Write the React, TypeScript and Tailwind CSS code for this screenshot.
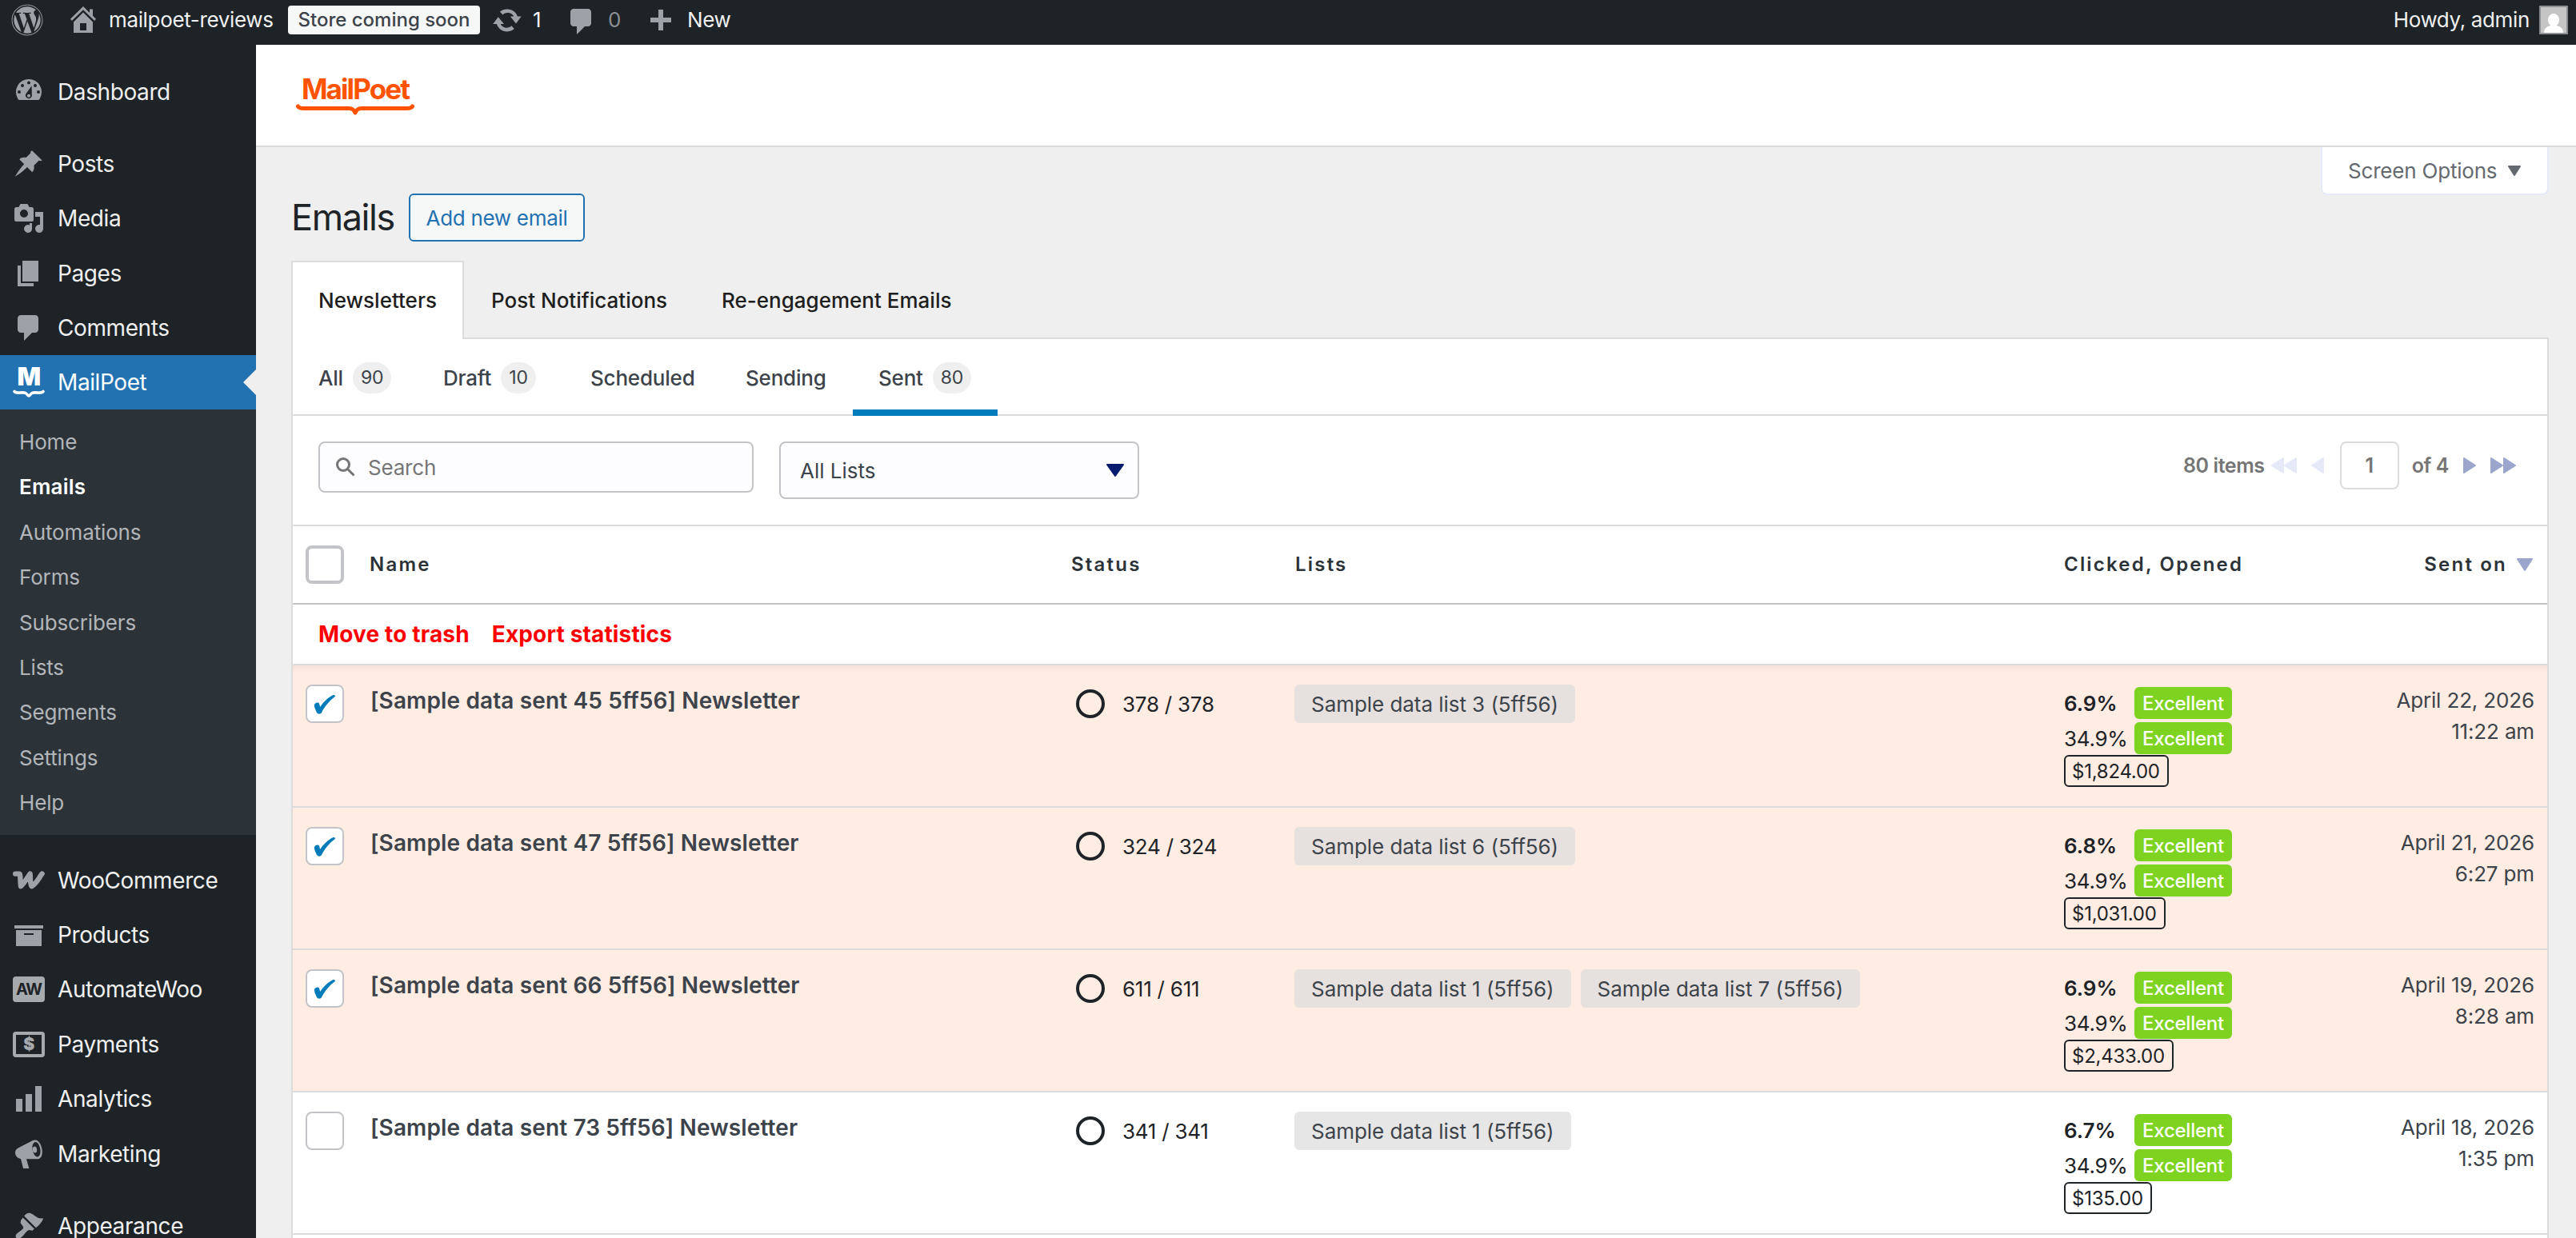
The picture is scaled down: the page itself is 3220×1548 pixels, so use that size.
import type { ReactNode } from "react";
import { FaWordpress } from "react-icons/fa";

const Icon = ({ children }: { children: ReactNode }) => (
  <svg width={40} height={40} viewBox="0 0 20 20" fill="currentColor" className="shrink-0">
    {children}
  </svg>
);

const IconDashboard = () => (
  <Icon>
    <path
      fillRule="evenodd"
      d="M10 2a8 8 0 0 0-7 11.9c.2.4.6 1.1.9 1.1h12.2c.3 0 .7-.7.9-1.1A8 8 0 0 0 10 2zm0 1.2a1 1 0 1 1 0 2 1 1 0 0 1 0-2zM6 5a1 1 0 1 1 0 2 1 1 0 0 1 0-2zm8 0a1 1 0 1 1 0 2 1 1 0 0 1 0-2zM4 9a1 1 0 1 1 0 2 1 1 0 0 1 0-2zm12 0a1 1 0 1 1 0 2 1 1 0 0 1 0-2zm-4.2-2.9.1 5.5a2 2 0 1 1-3.4-.9zM10 11.4a1 1 0 1 0 0 2 1 1 0 0 0 0-2z"
    />
  </Icon>
);

const IconPin = () => (
  <Icon>
    <path
      transform="translate(-.2 .4)"
      d="M12.2 1.2 18.5 7.4c-.7.5-1.4.3-2 .1l-3.1 3.1c.3 1.4.2 2.8-1.1 4.1l-3.1-3.1c-1.7 1.7-4.6 4.2-7.6 5.9 1.6-3 3.9-6 5.7-7.8L4.3 6.7c1.2-1.2 2.700-1.400 4.200-1.100l2.900-2.900c-.3-.6-.1-1.100.8-1.500z"
    />
  </Icon>
);

const IconMedia = () => (
  <Icon>
    <path
      fillRule="evenodd"
      d="M1 4.2c0-.7.5-1.2 1.2-1.2h1.5l1.100-2h4.400l1.100 2h1.500c.7 0 1.200.5 1.200 1.200V11c0 .6-.5 1-1.200 1H2.200C1.500 12 1 11.600 1 11zM7 4.500a2.500 2.500 0 1 0 0 5 2.500 2.500 0 0 0 0-5z"
    />
    <path d="M14 6h5v10.500a2.500 2.500 0 1 1-2-2.450V9h-3zM10.500 13h1.500v3.700a2.500 2.500 0 1 1-1.500-2.500z" />
  </Icon>
);

const IconPages = () => (
  <Icon>
    <path d="M6 15V2h10v13zM5 16h8v2H3V5h2z" />
  </Icon>
);

const IconComment = () => (
  <Icon>
    <path d="M5 2h9c1.100 0 2 .9 2 2v7c0 1.100-.9 2-2 2h-2l-5 5v-5H5c-1.100 0-2-.9-2-2V4c0-1.100.9-2 2-2z" />
  </Icon>
);

const IconMailPoet = () => (
  <div className="flex h-[42px] w-10 shrink-0 flex-col items-center text-white">
    <span className="h-7 text-[31px] leading-[28px] font-black">M</span>
    <svg
      width="40"
      height="12"
      viewBox="0 0 40 12"
      className="mt-0.5"
      fill="none"
      stroke="currentColor"
      strokeWidth="3.6"
      strokeLinecap="round"
    >
      <path d="M2 2.500c3 3.500 10 0 14 2 2 1 2.500 3.500 4 3.500s2-2.500 4-3.500c4-2 11 1.500 14-2" />
    </svg>
  </div>
);

const IconWoo = () => (
  <Icon>
    <path
      d="M1.600 5.800h2.500c.9 0 .3 4 .9 7.800 2.400-2.200 3.800-5.200 5.800-7.800.4 2.600-.3 5.400 1 7.800 3-1.800 4.300-5 6.500-7.800"
      fill="none"
      stroke="currentColor"
      strokeWidth="3.2"
      strokeLinecap="round"
      strokeLinejoin="round"
    />
  </Icon>
);

const IconArchive = () => (
  <Icon>
    <path fillRule="evenodd" d="M19 4v2H1V4zM2 7h16v10H2zm11 3V9H7v1z" />
  </Icon>
);

const IconAutomateWoo = () => (
  <div className="flex h-8 w-10 shrink-0 items-center justify-center rounded bg-[#a7aaad] text-[20px] font-bold tracking-[-1px] text-[#1d2327]">
    AW
  </div>
);

const IconPayments = () => (
  <div className="flex h-8 w-10 shrink-0 items-center justify-center rounded border-4 border-[#a7aaad] text-[21px] leading-none font-black text-[#a7aaad]">
    $
  </div>
);

const IconBars = () => (
  <Icon>
    <path d="M18 18V2h-4v16zm-6 0V7H8v11zm-6 0v-8H2v8z" />
  </Icon>
);

const IconMegaphone = () => (
  <Icon>
    <path
      fillRule="evenodd"
      d="M14.200 1.200c2 .1 3.600 2.800 4.100 5.800.5 3.200-.5 6-2.600 6.100H8.500l1.700 5.900H6.500L5 13c-1.500 0-3.500-1.500-3.500-3.700 0-1.500.8-2.400 1.800-3l8.700-4.600c.7-.4 1.500-.5 2.200-.5zm0 1.300c-1.600.2-2.300 2.500-1.900 4.900.4 2.500 1.800 4.500 3.300 4.300 1.500-.3 1.900-2.500 1.500-4.900-.4-2.300-1.600-4.400-2.900-4.300z"
    />
    <ellipse cx="13.700" cy="7.300" rx="1.400" ry="2" transform="rotate(-10 13.700 7.300)" />
  </Icon>
);

const IconBrush = () => (
  <Icon>
    <path d="M14.500 11.100 7.100 3.800C8 2.500 9.500 1.600 11 2c2.600.8 4.300 4 8 3.100-.5 2.500-2.800 4.500-4.500 6zM6.300 4.700l7.100 7.100-1.100 1.100-2-.4c-1.300.2-2.400 1.700-3.300 2.900-.8 1.100-1.900 2.300-3.300 2.500-1.500.1-2.400-1.100-1.600-2.600.9-1.400 3.200-2.400 4.200-3.600.5-.6.3-1.200-.1-1.700L4.900 8.200c-.3-1.300.6-2.500 1.400-3.500z" />
  </Icon>
);

const IconHome = () => (
  <Icon>
    <path
      fillRule="evenodd"
      d="m17 8.400 1 1-.9 1.100L10 3.600l-7.100 6.900L2 9.400 10 1.500l4 4V3.200h2v4.200zM10 5.300l6 5.900V18H4v-6.800zM12 16.500V12H8v4.500z"
    />
  </Icon>
);

const IconUpdate = () => (
  <Icon>
    <path d="M10.200 3.300c2.900 0 5.300 1.800 6.300 4.400h2.300l-3.300 4.600-3.600-4.600h2.200a4.300 4.300 0 0 0-6.800-1L5.500 4.900a6.700 6.700 0 0 1 4.700-1.600zM4.400 8.100 8 12.500H5.800a4.300 4.300 0 0 0 6.900 1.100l1.700 1.900A6.800 6.800 0 0 1 3.400 12.500H1.100z" />
  </Icon>
);

type TriangleProps = { points: string; w: number; h: number; className?: string };

const Triangle = ({ points, w, h, className }: TriangleProps) => (
  <svg
    width={w}
    height={h}
    viewBox={`0 0 ${w} ${h}`}
    className={className}
    fill="currentColor"
    stroke="currentColor"
    strokeWidth="2"
    strokeLinejoin="round"
  >
    <polygon points={points} />
  </svg>
);

const ArrowLeft = ({ className }: { className?: string }) => (
  <Triangle w={16} h={20} points="1,10 15,1 15,19" className={className} />
);

const ArrowRight = ({ className }: { className?: string }) => (
  <Triangle w={16} h={20} points="1,1 15,10 1,19" className={className} />
);

const MenuItem = ({ icon, label }: { icon: ReactNode; label: string }) => (
  <li className="flex h-[68.4px] items-center gap-4 pt-px pl-4 text-[28px] tracking-[-0.4px] text-[#f0f0f1]">
    <span className="flex w-10 justify-center text-[#9ca2a7]">{icon}</span>
    {label}
  </li>
);

const submenu = ["Home", "Emails", "Automations", "Forms", "Subscribers", "Lists", "Segments", "Settings", "Help"];

const Sidebar = () => (
  <nav className="w-80 shrink-0 bg-[#1d2327] pt-6">
    <ul>
      <MenuItem icon={<IconDashboard />} label="Dashboard" />
      <li className="h-[22px]" />
      <MenuItem icon={<IconPin />} label="Posts" />
      <MenuItem icon={<IconMedia />} label="Media" />
      <MenuItem icon={<IconPages />} label="Pages" />
      <MenuItem icon={<IconComment />} label="Comments" />
      <li className="relative flex h-[68.4px] items-center gap-4 bg-[#2271b1] pl-4 text-[28px] tracking-[-0.4px] text-white">
        <IconMailPoet />
        MailPoet
        <span className="absolute top-[18px] right-0 border-y-[16px] border-r-[16px] border-y-transparent border-r-[#efefef]" />
      </li>
      <li className="bg-[#2c3338] py-3">
        <ul>
          {submenu.map((item) => (
            <li
              key={item}
              className={`flex h-[56.4px] items-center pt-px pl-6 text-[26px] ${
                item === "Emails"
                  ? "font-semibold tracking-[0.2px] text-white"
                  : "tracking-[-0.15px] text-[#b2b6ba]"
              }`}
            >
              {item}
            </li>
          ))}
        </ul>
      </li>
      <li className="h-[22px]" />
      <MenuItem icon={<IconWoo />} label="WooCommerce" />
      <MenuItem icon={<IconArchive />} label="Products" />
      <MenuItem icon={<IconAutomateWoo />} label="AutomateWoo" />
      <MenuItem icon={<IconPayments />} label="Payments" />
      <MenuItem icon={<IconBars />} label="Analytics" />
      <MenuItem icon={<IconMegaphone />} label="Marketing" />
      <li className="h-[22px]" />
      <MenuItem icon={<IconBrush />} label="Appearance" />
    </ul>
  </nav>
);

const AdminBar = () => (
  <header className="flex h-14 shrink-0 items-center bg-[#1d2327] pb-1.5 text-[26px] tracking-[-0.35px] text-[#f0f0f1]">
    <FaWordpress className="ml-3.5 size-10 text-[#9ca2a7]" />
    <div className="ml-[30px] flex w-[276px] items-center gap-3">
      <span className="text-[#9ca2a7]">
        <IconHome />
      </span>
      <span className="whitespace-nowrap">mailpoet-reviews</span>
    </div>
    <span className="flex h-9 w-60 items-center justify-center rounded bg-[#f6f7f7] text-[24px] font-medium tracking-normal whitespace-nowrap text-[#3c434a]">
      Store coming soon
    </span>
    <span className="ml-3.5 text-[#9ca2a7]">
      <IconUpdate />
    </span>
    <span className="ml-3 w-[41px]">1</span>
    <span className="mt-1 text-[#9ca2a7]">
      <IconComment />
    </span>
    <span className="ml-[13px] w-[53px] text-[#8c8f94]">0</span>
    <svg width="26" height="26" viewBox="0 0 26 26" className="text-[#9ca2a7]" fill="currentColor">
      <path d="M10 0h6v10h10v6H16v10h-6V16H0v-6h10z" />
    </svg>
    <span className="ml-5">New</span>
    <span className="ml-auto">Howdy, admin</span>
    <svg width="36" height="36" viewBox="0 0 36 36" className="mr-2.5 ml-3">
      <rect width="36" height="36" fill="#8c8f94" />
      <rect x="2" y="2" width="32" height="32" fill="#c5c5c5" />
      <ellipse cx="18" cy="18" rx="7" ry="8" fill="#fff" />
      <path d="M6 34c0-6 4-8 8-9h8c4 1 8 3 8 9z" fill="#fff" />
    </svg>
  </header>
);

const Logo = () => (
  <div className="flex w-[148px] flex-col items-center text-[#ff5301]">
    <span className="text-[35px] leading-8 font-bold tracking-[-1.9px]">MailPoet</span>
    <svg
      width="148"
      height="14"
      viewBox="0 0 148 14"
      className="mt-[3px]"
      fill="none"
      stroke="currentColor"
      strokeWidth="5"
      strokeLinecap="round"
      strokeLinejoin="round"
    >
      <path d="M2.500 3C4 5.500 6 5.500 9 5.500h57c5 0 6 2 8 5.500 2-3.500 3-5.500 8-5.500h57c3 0 5 0 6.500-2.500" />
    </svg>
  </div>
);

const filters = [
  { label: "All", count: 90, width: "w-[156px]" },
  { label: "Draft", count: 10, width: "w-[184px]" },
  { label: "Scheduled", width: "w-[194px]" },
  { label: "Sending", width: "w-[166px]" },
  { label: "Sent", count: 80, width: "w-[181px]", active: true },
];

const Filters = () => (
  <div className="flex h-24 border-b-2 border-[#dcdcde] text-[26px] font-medium tracking-[-0.2px] text-[#3c434a]">
    {filters.map(({ label, count, width, active }) => (
      <div
        key={label}
        className={`-mb-0.5 flex items-center gap-3 pl-8 ${width} ${
          active ? "border-b-8 border-[#007cba] pt-2" : ""
        }`}
      >
        <span className="pt-0.5">{label}</span>
        {count && (
          <span className="flex h-[39px] items-center rounded-full bg-[#efefef] px-2.5 text-[23px] font-normal">
            {count}
          </span>
        )}
      </div>
    ))}
  </div>
);

const Toolbar = () => (
  <div className="flex h-[138px] items-start border-b-2 border-[#dcdcde] pt-8 pr-[39px] pl-8 text-[26px]">
    <div className="flex h-16 w-[544px] items-center gap-4 rounded-lg border-2 border-[#c3c4c7] bg-[#fdfdff] pl-5 text-[#757575]">
      <svg width="24" height="24" viewBox="0 0 24 24" fill="none" stroke="currentColor" strokeWidth="3">
        <circle cx="9" cy="9" r="7.5" />
        <path d="m14.500 14.500 8 8" />
      </svg>
      <span className="pt-0.5 tracking-[-0.2px]">Search</span>
    </div>
    <div className="ml-8 flex h-[72px] w-[450px] items-center justify-between rounded-lg border-2 border-[#c3c4c7] bg-[#fdfdff] pr-[17px] pl-6 text-[#3c434a]">
      <span className="pt-0.5">All Lists</span>
      <Triangle w={22} h={16} points="1,1 21,1 11,15" className="text-[#071c6d]" />
    </div>
    <div className="ml-auto flex h-[60px] items-center text-[25px] font-semibold tracking-[-0.4px] text-[#757575]">
      <span>80 items</span>
      <span className="ml-2 flex text-[#e5e9f8]">
        <ArrowLeft />
        <ArrowLeft />
        <ArrowLeft className="ml-[18px]" />
      </span>
      <span className="mr-4 ml-5 flex h-[60px] w-[74px] items-center justify-center rounded-lg border-2 border-[#dcdcde]">
        1
      </span>
      <span>of 4</span>
      <span className="ml-[18px] flex text-[#9ca6cc]">
        <ArrowRight className="mr-[18px]" />
        <ArrowRight />
        <ArrowRight />
      </span>
    </div>
  </div>
);

const TableHead = () => (
  <div className="flex h-[98px] items-center border-b-2 border-[#c3c4c7] pl-4 text-[24px] font-semibold tracking-[2.2px] text-[#2c3338]">
    <span className="size-12 rounded-lg border-4 border-[#c3c4c7] bg-white" />
    <span className="ml-8 w-[877px]">Name</span>
    <span className="w-[280px]">Status</span>
    <span className="w-[961px]">Lists</span>
    <span>Clicked, Opened</span>
    <span className="mr-[18px] ml-auto flex items-center gap-3">
      Sent on
      <Triangle w={20} h={16} points="1,1 19,1 10,15" className="text-[#9ca6cc]" />
    </span>
  </div>
);

type Email = {
  id: number;
  sent: number;
  lists: number[];
  clicked: string;
  revenue: string;
  date: string;
  time: string;
  checked: boolean;
};

const emails: Email[] = [
  { id: 45, sent: 378, lists: [3], clicked: "6.9%", revenue: "$1,824.00", date: "April 22, 2026", time: "11:22 am", checked: true },
  { id: 47, sent: 324, lists: [6], clicked: "6.8%", revenue: "$1,031.00", date: "April 21, 2026", time: "6:27 pm", checked: true },
  { id: 66, sent: 611, lists: [1, 7], clicked: "6.9%", revenue: "$2,433.00", date: "April 19, 2026", time: "8:28 am", checked: true },
  { id: 73, sent: 341, lists: [1], clicked: "6.7%", revenue: "$135.00", date: "April 18, 2026", time: "1:35 pm", checked: false },
];

const Badge = () => (
  <span className="flex h-10 w-[122px] items-center justify-center rounded-md bg-[#7ed321] pt-0.5 text-[24px] font-medium tracking-[-0.25px] text-white">
    Excellent
  </span>
);

const EmailRow = ({ email }: { email: Email }) => (
  <div
    className={`flex h-[178px] items-start border-b-2 border-[#dcdcde] pl-4 text-[26px] text-[#1d2327] ${
      email.checked ? "bg-[#ffece2] first:shadow-[inset_0_8px_8px_-6px_rgba(60,0,0,0.08)]" : "bg-white"
    }`}
  >
    <span className="mt-6 flex size-12 items-center justify-center rounded-lg border-2 border-[#c3c4c7] bg-white">
      {email.checked && (
        <svg width="28" height="26" viewBox="0 0 28 26" className="mt-0.5 text-[#007cba]" fill="currentColor">
          <path d="M1 13c1-2.500 5-3.500 6-1 .6 1.500.8 2.500 1.200 4C12 10 18 4 24 1.200c1.500-.6 3.500 0 2.800 1.800C20 8 14 15 10 23c-1 2-4.500 2.500-6 0C2.500 20 .5 16 1 13z" />
        </svg>
      )}
    </span>
    <span className="mt-6 ml-[33px] w-[876px] text-[28px] leading-10 font-semibold tracking-[0.13px] text-[#3c434a]">
      [Sample data sent {email.id} 5ff56] Newsletter
    </span>
    <span className="mt-[30px] ml-1.5 flex h-9 w-[273px] items-center tracking-[-0.25px]">
      <span className="mr-[22px] size-9 rounded-full border-4 border-[#1d2327]" />
      <span className="pt-0.5">
        {email.sent} / {email.sent}
      </span>
    </span>
    <span className="mt-6 flex w-[962px] gap-3">
      {email.lists.map((list) => (
        <span
          key={list}
          className="flex h-12 items-center rounded-md bg-[#dedede]/75 px-[21px] pt-0.5 tracking-[-0.05px] text-[#3c434a]"
        >
          Sample data list {list} (5ff56)
        </span>
      ))}
    </span>
    <span className="mt-[27px] flex flex-col">
      <span className="flex h-11 items-start">
        <span className="w-[88px] leading-[41px] font-semibold">{email.clicked}</span>
        <Badge />
      </span>
      <span className="flex h-[41px] items-start">
        <span className="w-[88px] leading-[41px] tracking-[-0.3px]">34.9%</span>
        <Badge />
      </span>
      <span className="flex h-10 items-center self-start rounded-md border-2 border-[#1d2327] pt-0.5 pr-[9px] pl-2 text-[24px] tracking-[-0.25px]">
        {email.revenue}
      </span>
    </span>
    <span className="mt-6 mr-4 ml-auto text-right leading-[39px] tracking-[-0.15px] text-[#3c434a]">
      {email.date}
      <br />
      {email.time}
    </span>
  </div>
);

const App = () => {
  return (
    <div className="flex h-[1548px] w-[3220px] flex-col overflow-hidden bg-[#efefef] font-['Inter','Liberation_Sans',sans-serif] leading-none">
      <AdminBar />
      <div className="flex min-h-0 flex-1">
        <Sidebar />
        <main className="flex min-w-0 flex-1 flex-col">
          <div className="h-32 shrink-0 border-b-2 border-[#dcdcde] bg-white pt-[39px] pl-[50px]">
            <Logo />
          </div>
          <div className="mr-[34px] flex h-[60px] w-[285px] shrink-0 items-center gap-3.5 self-end rounded-b-lg border-2 border-t-0 border-[#e5e9f8] bg-white pl-8 text-[26px] tracking-[-0.2px] text-[#646970]">
            <span className="pt-0.5">Screen Options</span>
            <Triangle w={16} h={13} points="1,1 15,1 8,12" />
          </div>
          <div className="flex h-[82px] shrink-0 items-start gap-[18px] pl-11">
            <h1 className="-mt-0.5 w-[129px] text-[45px] leading-[60px] tracking-[-1.4px] text-[#1d2327]">Emails</h1>
            <button className="-mt-0.5 h-[60px] w-[220px] rounded-md border-2 border-[#2271b1] bg-[#f6f7f7] pt-0.5 text-[26px] tracking-[-0.3px] whitespace-nowrap text-[#2271b1]">
              Add new email
            </button>
          </div>
          <div className="ml-11 flex h-24 shrink-0 items-stretch text-[26px] font-medium text-[#1e1e1e]">
            <span className="z-10 -mb-0.5 flex w-[216px] items-center justify-center border-2 border-b-0 border-[#dcdcde] bg-white">
              Newsletters
            </span>
            <span className="flex items-center px-[34px] pt-1">Post Notifications</span>
            <span className="flex items-center px-[34px] pt-1">Re-engagement Emails</span>
          </div>
          <section className="mr-[34px] ml-11 flex-1 border-2 border-b-0 border-[#dcdcde] bg-white">
            <Filters />
            <Toolbar />
            <TableHead />
            <div className="flex h-[76px] items-center gap-7 border-b-2 border-[#dcdcde] pl-8 text-[28px] font-bold tracking-[0.15px] text-[#f00]">
              <span>Move to trash</span>
              <span>Export statistics</span>
            </div>
            <div>
              {emails.map((email) => (
                <EmailRow key={email.id} email={email} />
              ))}
            </div>
          </section>
        </main>
      </div>
    </div>
  );
};

export default App;
